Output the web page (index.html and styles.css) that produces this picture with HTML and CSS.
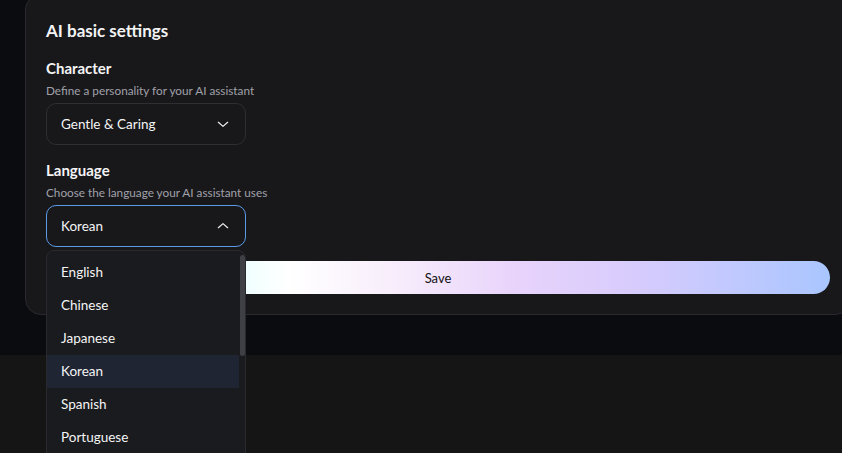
FILE: index.html
```html
<!DOCTYPE html>
<html lang="en">

<head>
    <meta charset="UTF-8">
    <meta name="viewport" content="width=device-width, initial-scale=1.0">
    <title>AI basic settings</title>
    <link rel="stylesheet" href="styles.css">
</head>

<body>

    <div class="page-top">
        <!-- Settings card -->
        <div class="card">
            <h2 class="card-title">AI basic settings</h2>

            <div class="field">
                <h3 class="field-label">Character</h3>
                <p class="field-desc">Define a personality for your AI assistant</p>
                <div class="select">
                    <div class="select-box">
                        <span>Gentle &amp; Caring</span>
                        <svg width="14" height="14" viewBox="0 0 24 24" fill="none" stroke="currentColor" stroke-width="2" stroke-linecap="round" stroke-linejoin="round"><path d="M4 9l8 7 8-7"/></svg>
                    </div>
                </div>
            </div>

            <div class="field">
                <h3 class="field-label">Language</h3>
                <p class="field-desc">Choose the language your AI assistant uses</p>
                <div class="select">
                    <div class="select-box open">
                        <span>Korean</span>
                        <svg width="14" height="14" viewBox="0 0 24 24" fill="none" stroke="currentColor" stroke-width="2" stroke-linecap="round" stroke-linejoin="round"><path d="M4 15l8-7 8 7"/></svg>
                    </div>
                    <!-- Dropdown menu -->
                    <div class="select-menu">
                        <ul class="select-options">
                            <li>English</li>
                            <li>Chinese</li>
                            <li>Japanese</li>
                            <li class="active">Korean</li>
                            <li>Spanish</li>
                            <li>Portuguese</li>
                            <li>French</li>
                            <li>German</li>
                        </ul>
                        <div class="scroll-thumb"></div>
                    </div>
                </div>
            </div>

            <button class="save-button">Save</button>
        </div>
    </div>

    <div class="page-bottom"></div>

</body>

</html>
```

FILE: styles.css
```css
html,
body {
    margin: 0;
    padding: 0;
    overflow: hidden;
}

body {
    font-family: Lato, "Noto Sans", sans-serif;
    background-color: #151515;
    color: #f4f4f5;
    height: 100vh;
}

/* Dark strip behind the card */
.page-top {
    display: flow-root;
    background-color: #0b0c0f;
    height: 355px;
    padding-left: 25px;
}

.page-bottom {
    height: 98px;
}

/* Settings card */
.card {
    width: 784px;
    margin-top: -6px;
    background-color: #18181b;
    border: 1px solid #2a2a2e;
    border-radius: 16px;
    padding: 24px 20px 20px 20px;
}

.card-title {
    margin: 0;
    font-size: 17px;
    line-height: 24px;
    font-weight: 700;
}

.field {
    margin-top: 14px;
}

.field-label {
    margin: 0;
    font-size: 15px;
    line-height: 22px;
    font-weight: 700;
}

.field-desc {
    margin: 4px 0 4px;
    font-size: 11.75px;
    line-height: 16px;
    color: #a1a1aa;
}

/* Select */
.select {
    position: relative;
    width: 200px;
}

.select-box {
    box-sizing: border-box;
    height: 42px;
    border: 1px solid #2e2e33;
    border-radius: 10px;
    padding: 0 14px;
    display: flex;
    align-items: center;
    justify-content: space-between;
    font-size: 13.5px;
    color: #f4f4f5;
}

.select-box.open {
    border-color: #5b9be6;
}

.select-box svg {
    margin-right: 1px;
}

/* Open dropdown */
.select-menu {
    position: absolute;
    top: 45px;
    left: 0;
    width: 200px;
    box-sizing: border-box;
    background-color: #1a1b1e;
    border: 1px solid #2a2a2e;
    border-radius: 8px;
    max-height: 240px;
    overflow: hidden;
    z-index: 10;
}

.select-options {
    margin: 0;
    padding: 5px 6px 4px 0;
    list-style: none;
}

.select-options li {
    height: 33px;
    line-height: 33px;
    padding-left: 14px;
    font-size: 13.5px;
    color: #f4f4f5;
}

.select-options li.active {
    background-color: #1f2533;
}

.scroll-thumb {
    position: absolute;
    top: 4px;
    right: 0;
    width: 5px;
    height: 101px;
    background-color: #3f3f46;
    border-radius: 3px;
}

/* Save button */
.save-button {
    display: block;
    width: 100%;
    height: 33px;
    margin-top: 14px;
    border: none;
    border-radius: 17px;
    font-family: inherit;
    font-size: 13px;
    font-weight: 400;
    color: #111;
    background: linear-gradient(90deg, #e6ffff 0%, #effffe 25%, #ffffff 31%, #f8eefc 44%, #e8d3fb 60%, #d6cbfd 76%, #a9c6fe 100%);
}
```
